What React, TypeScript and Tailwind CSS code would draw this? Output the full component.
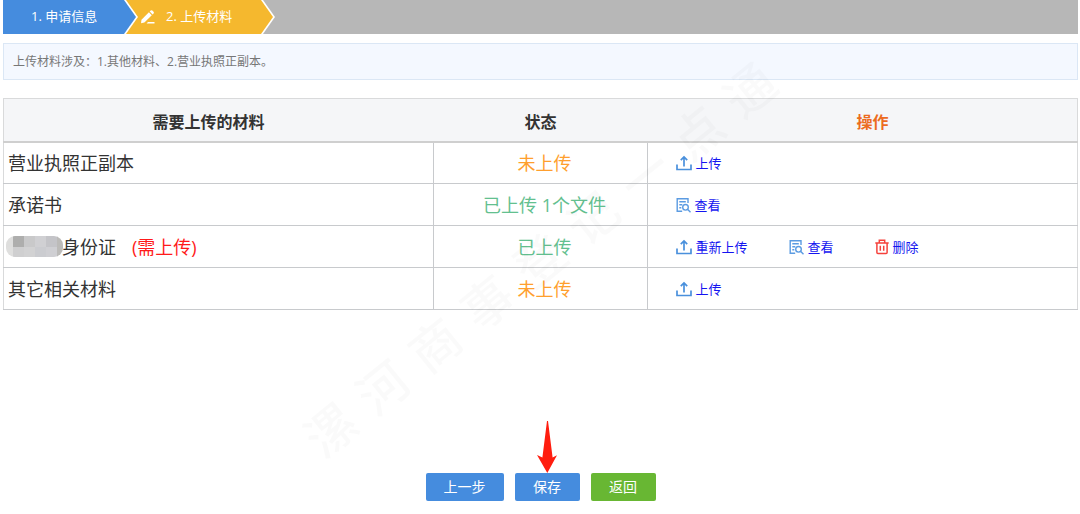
import type { ReactNode } from "react";

function UploadIcon() {
  return (
    <svg width="16" height="16" viewBox="0 0 16 16" fill="none" stroke="#4a90dc" strokeWidth="1.7" aria-hidden="true">
      <path d="M1 9.5v5h14v-5" />
      <path d="M8 11.5V2M4.8 5.2L8 1.9l3.2 3.3" />
    </svg>
  );
}

function ViewIcon() {
  return (
    <svg width="15" height="16" viewBox="0 0 15 16" fill="none" stroke="#5b9be2" strokeWidth="1.4" aria-hidden="true">
      <path d="M12 6V1.7H1.2v12.6h5" />
      <path d="M3.3 4.8h6.5M3.3 7.8h3M3.3 10.8h2" />
      <circle cx="9.5" cy="10.3" r="2.8" />
      <path d="M11.5 12.3l3 3" />
    </svg>
  );
}

function DeleteIcon() {
  return (
    <svg width="14" height="16" viewBox="0 0 14 16" fill="none" stroke="#f5423c" strokeWidth="1.5" aria-hidden="true">
      <path d="M.3 3.9h13.4M4.3 3.7V1.3h5.4v2.4" />
      <path d="M1.9 4v9.6q0 1 1 1h8.2q1 0 1-1V4" />
      <path d="M5.3 6.8v5M8.7 6.8v5" />
    </svg>
  );
}

function PencilIcon() {
  return (
    <svg width="16" height="16" viewBox="0 0 16 16" fill="#fff" aria-hidden="true">
      <path d="M1 14.3l.5-3.6L8.9 3.3l2.9 2.9-7.4 7.3z" />
      <path d="M9.7 2.5l1-1q.8-.7 1.6 0l1.3 1.3q.7.8 0 1.6l-1 1z" />
      <path d="M8 13h6.5v1.4H6.6z" />
    </svg>
  );
}

const mosaic = [
  ["#dededd", "#aeaead", "#c9c9ca", "#d0d0d3", "#c4c4c8", "#bcbbb9", "#d2d2d3"],
  ["#dfdfde", "#cfcfd0", "#d2d2d3", "#cbccd0", "#cfcfd3", "#bcbbb9", "#d5d5d6"],
];

function MaskedName() {
  return (
    <svg width="57" height="21" viewBox="0 0 57 21" className="-mr-px -ml-0.5 shrink-0" role="img" aria-label="***">
      <clipPath id="mask-shape">
        <rect width="57" height="21" rx="9" />
      </clipPath>
      <g clipPath="url(#mask-shape)">
        {mosaic.map((row, y) =>
          row.map((fill, x) => (
            <rect key={`${x}-${y}`} x={x === 0 ? 0 : x * 11 - 4} y={y * 11} width="12" height="11" fill={fill} />
          )),
        )}
      </g>
    </svg>
  );
}

type ActionKind = "upload" | "reupload" | "view" | "delete";

const actions: Record<ActionKind, { label: string; icon: ReactNode }> = {
  upload: { label: "上传", icon: <UploadIcon /> },
  reupload: { label: "重新上传", icon: <UploadIcon /> },
  view: { label: "查看", icon: <ViewIcon /> },
  delete: { label: "删除", icon: <DeleteIcon /> },
};

const rows: { name: string; masked?: boolean; note?: string; status: string; done: boolean; actions: ActionKind[] }[] = [
  { name: "营业执照正副本", status: "未上传", done: false, actions: ["upload"] },
  { name: "承诺书", status: "已上传 1个文件", done: true, actions: ["view"] },
  { name: "身份证", masked: true, note: "(需上传)", status: "已上传", done: true, actions: ["reupload", "view", "delete"] },
  { name: "其它相关材料", status: "未上传", done: false, actions: ["upload"] },
];

const arrowClip =
  "[clip-path:polygon(0_0,calc(100%-12px)_0,100%_50%,calc(100%-12px)_100%,0_100%)]";

function Steps() {
  return (
    <ol className="flex h-[34px] bg-[#b7b7b7] text-[13px] text-white">
      <li className={`z-10 w-[135px] bg-white pr-[2px] ${arrowClip}`}>
        <a href="#info" className={`flex h-full items-center bg-[#458cde] pl-7 ${arrowClip}`}>
          1. 申请信息
        </a>
      </li>
      <li className={`-ml-3 w-[149px] bg-white pr-[2px] ${arrowClip}`}>
        <a href="#upload" aria-current="step" className={`flex h-full items-center gap-2.5 bg-[#f5b82e] pl-[14px] ${arrowClip}`}>
          <PencilIcon />
          2. 上传材料
        </a>
      </li>
    </ol>
  );
}

function Watermark() {
  return (
    <div
      aria-hidden="true"
      className="pointer-events-none absolute top-[230px] left-1/2 flex w-[590px] -translate-x-1/2 -rotate-[39deg] justify-between text-[50px] leading-[60px] font-medium text-black/[0.02]"
    >
      {Array.from("漯河商事登记一点通").map((c) => (
        <span key={c}>{c}</span>
      ))}
    </div>
  );
}

export default function App() {
  return (
    <main className="relative min-h-screen overflow-hidden bg-white pr-[2px] pl-[3px] font-['Open_Sans','Noto_Sans_CJK_SC',sans-serif] text-[#333]">
      <Steps />
      <p className="mt-[9px] border border-[#dbe7f5] bg-[#f4f8ff] px-[9px] text-xs leading-[35px] text-[#777]">
        上传材料涉及：1.其他材料、2.营业执照正副本。
      </p>

      <table className="mt-[18px] w-full table-fixed border-collapse border border-[#d9dadb]">
        <thead>
          <tr className="h-[43px] border-b-2 border-[#cfcfcf] bg-[#f5f6f8] text-base font-bold">
            <th className="w-[40%] pt-1 pr-5">需要上传的材料</th>
            <th className="w-[20%] pt-1">状态</th>
            <th className="w-[40%] pt-1 pl-5 text-[#ec6c1f]">操作</th>
          </tr>
        </thead>
        <tbody>
          {rows.map((row) => (
            <tr key={row.name} className="h-[42px] border-b border-[#c8cacd] text-lg leading-6">
              <td className="border-r border-[#c8cacd] pl-1">
                <div className="flex items-center">
                  {row.masked && <MaskedName />}
                  {row.name}
                  {row.note && <span className="ml-4 text-[#ff1a1a]">{row.note}</span>}
                </div>
              </td>
              <td className={`border-r border-[#c8cacd] pl-2 text-center ${row.done ? "text-[#63c08f]" : "text-[#ff9f2e]"}`}>
                {row.status}
              </td>
              <td className="pl-7">
                <div className="flex items-center gap-[42px]">
                  {row.actions.map((kind) => (
                    <button key={kind} type="button" className="flex items-center gap-[3px] text-[13px] leading-5 text-[#1414f0]">
                      {actions[kind].icon}
                      {actions[kind].label}
                    </button>
                  ))}
                </div>
              </td>
            </tr>
          ))}
        </tbody>
      </table>

      <div className="mt-[163px] mb-3 flex justify-center gap-[11px] text-sm text-white">
        <button type="button" className="h-7 w-[78px] rounded-xs bg-[#458cde]">上一步</button>
        <button type="button" className="relative h-7 w-[65px] rounded-xs bg-[#458cde]">
          <svg width="20" height="52" viewBox="0 0 20 52" fill="#ff1d0f" className="absolute bottom-full left-[22px]" aria-hidden="true">
            <path d="M10 0h1l4.6 36.5 4.4-2.3L10.3 52 0 34l5.4 2.5z" />
          </svg>
          保存
        </button>
        <button type="button" className="h-7 w-[65px] rounded-xs bg-[#68b733]">返回</button>
      </div>
      <Watermark />
    </main>
  );
}
